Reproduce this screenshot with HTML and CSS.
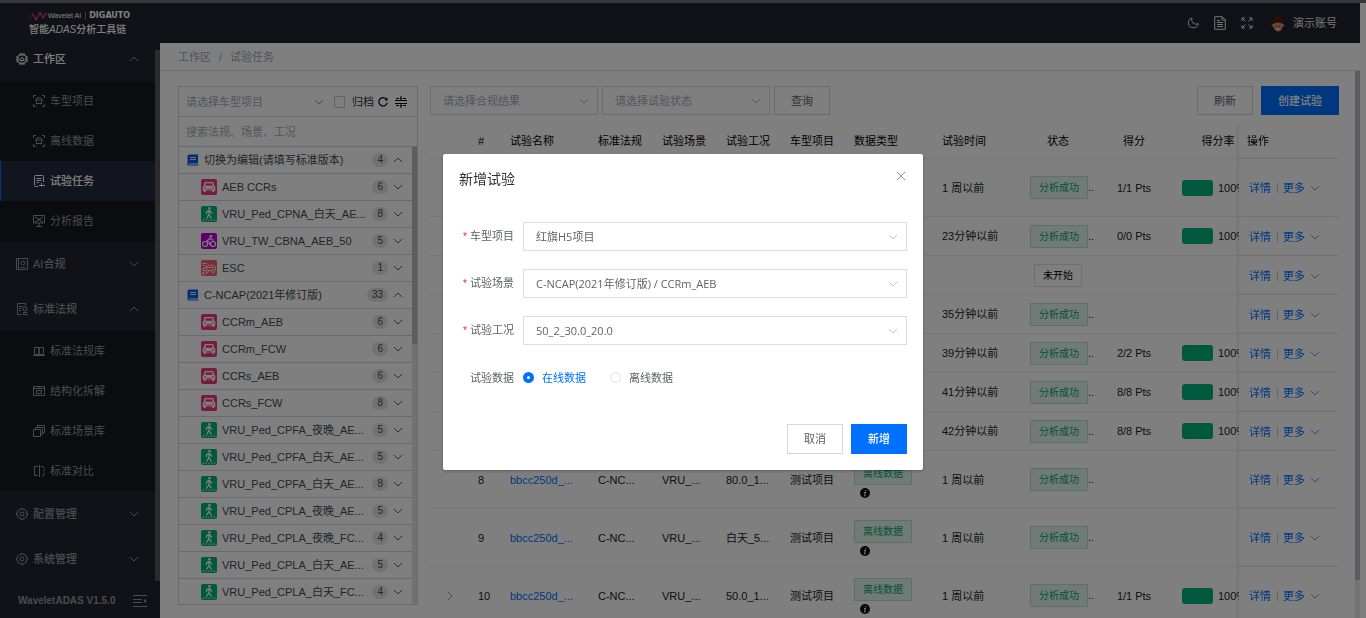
FILE: index.html
```
<!DOCTYPE html>
<html lang="zh-CN">
<head>
    <meta charset="UTF-8">
    <meta name="viewport" content="width=device-width, initial-scale=1.0">
    <title>试验任务</title>
    <link rel="stylesheet" href="styles.css">
</head>
<body>
    <!-- Icon set -->
    <svg class="icon-set" aria-hidden="true">
        <symbol id="i-down" viewBox="0 0 12 12"><path d="M2 4l4 4 4-4" fill="none" stroke="currentColor"/></symbol>
        <symbol id="i-up" viewBox="0 0 12 12"><path d="M2 8l4-4 4 4" fill="none" stroke="currentColor"/></symbol>
        <symbol id="i-right" viewBox="0 0 12 12"><path d="M4 2l4 4-4 4" fill="none" stroke="currentColor"/></symbol>
        <symbol id="i-close" viewBox="0 0 12 12"><path d="M2 2l8 8M10 2l-8 8" fill="none" stroke="currentColor"/></symbol>
        <symbol id="i-chip" viewBox="0 0 12 12"><g fill="none" stroke="currentColor"><rect x="2" y="2" width="8" height="8" rx="2"/><path d="M4 7.500h4V6L6 4.500 4 6zM4 0v2M6 0v2M8 0v2M4 10v2M6 10v2M8 10v2M0 4h2M0 6h2M0 8h2M10 4h2M10 6h2M10 8h2"/></g></symbol>
        <symbol id="i-scan" viewBox="0 0 12 12"><g fill="none" stroke="currentColor"><path d="M.5 3V.5H3M9 .5h2.500V3M11.500 9v2.500H9M3 11.500H.5V9"/><path d="M3.500 9.500v-3L2.500 5.500 4 3h4l1.500 2.500-1 1v3M2 5.500l2-.5h4l2 .5M4 8.500h4"/></g></symbol>
        <symbol id="i-task" viewBox="0 0 12 12"><path d="M5 11.500H2.500a1 1 0 0 1-1-1v-9a1 1 0 0 1 1-1h7a1 1 0 0 1 1 1V7M3.500 3.500h5M3.500 5.500h5M3.500 7.500H6M6 10.500h6M8.500 8v3.500" fill="none" stroke="currentColor"/></symbol>
        <symbol id="i-report" viewBox="0 0 12 12"><path d="M.5.5h11v7.500H.5zM6 8v3M3 11.500h6M2 2.500h2l4 4h2M2 6.500h2l4-4h2M4 4.500h4" fill="none" stroke="currentColor"/></symbol>
        <symbol id="i-book-user" viewBox="0 0 12 12"><g fill="none" stroke="currentColor"><path d="M.5.5h11v11H.5zM2.500.5v11M4.500 9.500h5"/><circle cx="7" cy="5" r="2"/></g></symbol>
        <symbol id="i-law" viewBox="0 0 12 12"><g fill="none" stroke="currentColor"><path d="M5 11.500H1.500V.5h8V3M3 3.500h4M3 5.500h2M3 7.500h2M6 11.500h6M7 9.500h4"/><circle cx="9" cy="6" r="2"/></g></symbol>
        <symbol id="i-lib" viewBox="0 0 12 12"><path d="M1.500 2.500h4.500v7H1.500zM6 2.500h4.500v7H6zM0 10.500h12" fill="none" stroke="currentColor"/></symbol>
        <symbol id="i-struct" viewBox="0 0 12 12"><path d="M.5 1.500h11v9H.5zM.5 3.500h11M3.500 5.500h5v3h-5zM6 1.500v2" fill="none" stroke="currentColor"/></symbol>
        <symbol id="i-cube" viewBox="0 0 12 12"><path d="M.5 4.500h7v7h-7zM2.500 4V2.500h7v7H8M4.500 2V.5h7v7H10" fill="none" stroke="currentColor"/></symbol>
        <symbol id="i-compare" viewBox="0 0 12 12"><g fill="none" stroke="currentColor"><path d="M5 1.500H1.500v9H5M6.500 0v12"/><path d="M8 1.500h3v9H8" stroke-dasharray="2 1"/></g></symbol>
        <symbol id="i-gear" viewBox="0 0 12 12"><g fill="none" stroke="currentColor"><circle cx="6" cy="6" r="2"/><path d="M5 .5h2l.5 1.500 1.500-.5 1.500 1.500-.5 1.500 1.500.5v2l-1.500.5.5 1.500L9 10.500 7.500 10 7 11.500H5L4.500 10l-1.500.5L1.500 9 2 7.500.5 7V5L2 4.500 1.500 3 3 1.500l1.500.5z"/></g></symbol>
        <symbol id="i-fold" viewBox="0 0 14 12"><path d="M0 .5h14M0 4.500h9M0 7.500h9M0 11.500h14" fill="none" stroke="currentColor"/><path d="M13 3.500v5L10.500 6z" fill="currentColor"/></symbol>
        <symbol id="i-moon" viewBox="0 0 12 12"><path d="M5 1a4.500 4.500 0 0 0 6.300 5.700A5 5 0 1 1 5 1z" fill="none" stroke="currentColor"/></symbol>
        <symbol id="i-doc" viewBox="0 0 12 14"><path d="M.7.7h7.600l3 3v9.600H.7zM8 1v3h3" fill="none" stroke="currentColor"/><path d="M3 4.500h3M3 6.500h6M3 8.500h6M3 10.500h6" stroke="currentColor"/></symbol>
        <symbol id="i-full" viewBox="0 0 12 12"><path d="M1 4V1h3M8 1h3v3M11 8v3H8M4 11H1V8M1 1l3.500 3.500M11 1L7.500 4.500M11 11L7.500 7.500M1 11l3.500-3.500" fill="none" stroke="currentColor"/></symbol>
        <symbol id="i-refresh" viewBox="0 0 12 12"><path d="M9.200 3A4.200 4.200 0 1 0 10.200 6.500" fill="none" stroke="currentColor" stroke-width="1.200"/><path d="M10.500 1.500v3h-3z" fill="currentColor"/></symbol>
        <symbol id="i-collapse" viewBox="0 0 12 12"><path d="M0 4.500h12M0 7.500h12M1 2.500h3M8 2.500h3M1 9.500h3M8 9.500h3M6 0v3M6 9v3" stroke="currentColor"/><path d="M4.500 2h3L6 4zM4.500 10h3L6 8z" fill="currentColor"/></symbol>
        <symbol id="i-book" viewBox="0 0 12 12"><path d="M2 .5h9v9H2a1 1 0 0 0 0 1h9.500v1H2a1.500 1.500 0 0 1-1.500-1.500V2A1.500 1.500 0 0 1 2 .5z" fill="#0a5ce0"/><path d="M3 3.500h6M3 5.500h6" stroke="#dbe8ff"/></symbol>
        <symbol id="i-car" viewBox="0 0 16 16"><rect width="16" height="16" rx="2" fill="#f0387f"/><path d="M4.500 3h7a1 1 0 0 1 1 .7L13.300 7l1 .8v3.700h-1V13h-2v-1.500H4.700V13h-2v-1.500h-1V7.800l1-.8.8-3.300a1 1 0 0 1 1-.7z" fill="#fff"/><path d="M4.800 4.300h6.400l.6 2.400H4.200zM3 8.500h2v1H3zM11 8.500h2v1h-2zM5.500 10h5v.8h-5z" fill="#f0387f"/></symbol>
        <symbol id="i-walk" viewBox="0 0 16 16"><rect width="16" height="16" rx="2" fill="#00b07a"/><circle cx="8.500" cy="2.300" r="1.300" fill="#fff"/><path d="M8 4v4.500l2.500 4M8 8.500L5.500 12.500M7.500 4.500L5.500 6v2M8.500 4.500L11 7.500" fill="none" stroke="#fff" stroke-width="1.300"/><path d="M2 15l1-2M5 15l.5-1.500M8 15v-1.500M11 15l-.5-1.500M14 15l-1-2" stroke="#fff" stroke-width=".8"/></symbol>
        <symbol id="i-bike" viewBox="0 0 16 16"><rect width="16" height="16" rx="2" fill="#b800d8"/><g fill="none" stroke="#fff" stroke-width="1.200"><circle cx="4" cy="11" r="2.500"/><circle cx="12" cy="11" r="2.500"/><path d="M8.500 12V9.500L6 8l3-3 2 2h2"/></g><circle cx="10" cy="3.200" r="1.300" fill="#fff"/></symbol>
        <symbol id="i-esc" viewBox="0 0 16 16"><rect width="16" height="16" rx="2" fill="#f4606c"/><g fill="none" stroke="#fff" stroke-width=".8"><path d="M1 3.500h5M2 5.500h2M1 12.500h2M1 14h5M4 8l3-2.500 4-.5 3.500 1.500V10H14M10 10.500H8M4 10.500H2V8.500L5 7.500h8"/><circle cx="6" cy="11" r="1.500"/><circle cx="12" cy="11" r="1.500"/></g></symbol>
        <symbol id="i-info" viewBox="0 0 10 10"><circle cx="5" cy="5" r="5" fill="#111"/><path d="M5.700 2v1.200M5.400 4.200L4.700 7.500M4 4.500h1.500M4 7.800h1.500" stroke="#fff"/></symbol>
        <symbol id="i-wave" viewBox="0 0 18 10"><path d="M4 4l3 4 4-5.500L14 6l2.500-3" fill="none" stroke="#e0307c" stroke-width="1.200"/><g fill="#e0307c"><circle cx="1" cy="6" r=".8"/><circle cx="3.500" cy="3.500" r="1"/><circle cx="7" cy="8" r="1.600"/><circle cx="11" cy="2.500" r="1.600"/><circle cx="14" cy="6" r="1.300"/><circle cx="17" cy="3" r="1"/></g></symbol>
        <symbol id="i-avatar" viewBox="0 0 14 20"><path d="M6 1q2-1 2 2 3 1 4 6l-1 3H3L2 9q1-5 4-6z" fill="#42211b"/><path d="M2 11q5-3 10 0l1.500 1.500-2 1.500q-1 4.500-4.500 4.500T2.500 14L.5 12.500z" fill="#d98a63"/><path d="M5 13.500h1M8 13.500h1" stroke="#42211b"/><path d="M5.500 16h3" stroke="#fff"/></symbol>
    </svg>

    <div class="app">
        <!-- Sidebar -->
        <aside class="sidebar">
            <div class="sidebar-body">
                <div class="logo">
                    <div class="logo-brand">
                        <svg class="logo-mark"><use href="#i-wave"/></svg>
                        <span>Wavelet AI</span>
                        <b>DIGAUTO</b>
                    </div>
                    <div class="logo-title">智能<i>ADAS</i>分析工具链</div>
                </div>
                <nav class="menu">
                    <a class="menu-item open" href="#"><svg class="icon"><use href="#i-chip"/></svg><span>工作区</span><svg class="arrow"><use href="#i-up"/></svg></a>
                    <div class="submenu">
                        <a class="submenu-item" href="#"><svg class="icon"><use href="#i-scan"/></svg>车型项目</a>
                        <a class="submenu-item" href="#"><svg class="icon"><use href="#i-scan"/></svg>离线数据</a>
                        <a class="submenu-item active" href="#"><svg class="icon"><use href="#i-task"/></svg>试验任务</a>
                        <a class="submenu-item" href="#"><svg class="icon"><use href="#i-report"/></svg>分析报告</a>
                    </div>
                    <a class="menu-item" href="#"><svg class="icon"><use href="#i-book-user"/></svg><span>AI合规</span><svg class="arrow"><use href="#i-down"/></svg></a>
                    <a class="menu-item" href="#"><svg class="icon"><use href="#i-law"/></svg><span>标准法规</span><svg class="arrow"><use href="#i-up"/></svg></a>
                    <div class="submenu">
                        <a class="submenu-item" href="#"><svg class="icon"><use href="#i-lib"/></svg>标准法规库</a>
                        <a class="submenu-item" href="#"><svg class="icon"><use href="#i-struct"/></svg>结构化拆解</a>
                        <a class="submenu-item" href="#"><svg class="icon"><use href="#i-cube"/></svg>标准场景库</a>
                        <a class="submenu-item" href="#"><svg class="icon"><use href="#i-compare"/></svg>标准对比</a>
                    </div>
                    <a class="menu-item" href="#"><svg class="icon"><use href="#i-gear"/></svg><span>配置管理</span><svg class="arrow"><use href="#i-down"/></svg></a>
                    <a class="menu-item" href="#"><svg class="icon"><use href="#i-gear"/></svg><span>系统管理</span><svg class="arrow"><use href="#i-down"/></svg></a>
                </nav>
                <div class="sidebar-footer">
                    <b>WaveletADAS V1.5.0</b>
                    <svg class="fold"><use href="#i-fold"/></svg>
                </div>
            </div>
            <div class="sidebar-bar"></div>
        </aside>

        <div class="page">
            <header class="topbar">
                <svg class="icon"><use href="#i-moon"/></svg>
                <svg class="icon-tall"><use href="#i-doc"/></svg>
                <svg class="icon"><use href="#i-full"/></svg>
                <div class="account"><svg class="avatar"><use href="#i-avatar"/></svg>演示账号</div>
            </header>
            <div class="breadcrumb"><a href="#">工作区</a><span>/</span><a href="#">试验任务</a></div>

            <div class="scroll-area">
                <main class="content">
                    <!-- Scene tree -->
                    <section class="tree">
                        <div class="tree-filter">
                            <select class="tree-select" aria-label="车型项目"><option>请选择车型项目</option></select>
                            <svg class="arrow"><use href="#i-down"/></svg>
                            <label class="archive"><input type="checkbox">归档</label>
                            <svg class="tool"><use href="#i-refresh"/></svg>
                            <svg class="tool last"><use href="#i-collapse"/></svg>
                        </div>
                        <input class="tree-search" type="text" placeholder="搜索法规、场景、工况" aria-label="搜索">
                        <div class="tree-body">
                            <div class="tree-list">
                                <div class="node parent"><svg class="icon"><use href="#i-book"/></svg><span>切换为编辑(请填写标准版本)</span><em>4</em><svg class="arrow"><use href="#i-up"/></svg></div>
                                <div class="node"><svg class="scene"><use href="#i-car"/></svg><span>AEB CCRs</span><em>6</em><svg class="arrow"><use href="#i-down"/></svg></div>
                                <div class="node"><svg class="scene"><use href="#i-walk"/></svg><span>VRU_Ped_CPNA_白天_AE...</span><em>8</em><svg class="arrow"><use href="#i-down"/></svg></div>
                                <div class="node"><svg class="scene"><use href="#i-bike"/></svg><span>VRU_TW_CBNA_AEB_50</span><em>5</em><svg class="arrow"><use href="#i-down"/></svg></div>
                                <div class="node"><svg class="scene"><use href="#i-esc"/></svg><span>ESC</span><em>1</em><svg class="arrow"><use href="#i-down"/></svg></div>
                                <div class="node parent"><svg class="icon"><use href="#i-book"/></svg><span>C-NCAP(2021年修订版)</span><em>33</em><svg class="arrow"><use href="#i-up"/></svg></div>
                                <div class="node"><svg class="scene"><use href="#i-car"/></svg><span>CCRm_AEB</span><em>6</em><svg class="arrow"><use href="#i-down"/></svg></div>
                                <div class="node"><svg class="scene"><use href="#i-car"/></svg><span>CCRm_FCW</span><em>6</em><svg class="arrow"><use href="#i-down"/></svg></div>
                                <div class="node"><svg class="scene"><use href="#i-car"/></svg><span>CCRs_AEB</span><em>6</em><svg class="arrow"><use href="#i-down"/></svg></div>
                                <div class="node"><svg class="scene"><use href="#i-car"/></svg><span>CCRs_FCW</span><em>8</em><svg class="arrow"><use href="#i-down"/></svg></div>
                                <div class="node"><svg class="scene"><use href="#i-walk"/></svg><span>VRU_Ped_CPFA_夜晚_AE...</span><em>5</em><svg class="arrow"><use href="#i-down"/></svg></div>
                                <div class="node"><svg class="scene"><use href="#i-walk"/></svg><span>VRU_Ped_CPFA_白天_AE...</span><em>5</em><svg class="arrow"><use href="#i-down"/></svg></div>
                                <div class="node"><svg class="scene"><use href="#i-walk"/></svg><span>VRU_Ped_CPFA_白天_AE...</span><em>8</em><svg class="arrow"><use href="#i-down"/></svg></div>
                                <div class="node"><svg class="scene"><use href="#i-walk"/></svg><span>VRU_Ped_CPLA_夜晚_AE...</span><em>5</em><svg class="arrow"><use href="#i-down"/></svg></div>
                                <div class="node"><svg class="scene"><use href="#i-walk"/></svg><span>VRU_Ped_CPLA_夜晚_FC...</span><em>4</em><svg class="arrow"><use href="#i-down"/></svg></div>
                                <div class="node"><svg class="scene"><use href="#i-walk"/></svg><span>VRU_Ped_CPLA_白天_AE...</span><em>5</em><svg class="arrow"><use href="#i-down"/></svg></div>
                                <div class="node"><svg class="scene"><use href="#i-walk"/></svg><span>VRU_Ped_CPLA_白天_FC...</span><em>4</em><svg class="arrow"><use href="#i-down"/></svg></div>
                            </div>
                            <div class="tree-bar"><div class="tree-thumb"></div></div>
                        </div>
                    </section>

                    <!-- Task list -->
                    <section class="tasks">
                        <div class="filters">
                            <div class="select-box filter"><select aria-label="合规结果"><option>请选择合规结果</option></select><svg class="arrow"><use href="#i-down"/></svg></div>
                            <div class="select-box filter"><select aria-label="试验状态"><option>请选择试验状态</option></select><svg class="arrow"><use href="#i-down"/></svg></div>
                            <button class="btn">查询</button>
                            <div class="filters-right">
                                <button class="btn">刷新</button>
                                <button class="btn primary">创建试验</button>
                            </div>
                        </div>
                        <div class="table-container">
                            <table>
                                <colgroup>
                                    <col class="c-expand"><col class="c-index"><col class="c-wide"><col class="c-short"><col class="c-short"><col class="c-short"><col class="c-short"><col class="c-wide"><col class="c-wide"><col class="c-status"><col class="c-score"><col class="c-wide"><col class="c-ops">
                                </colgroup>
                                <thead>
                                    <tr>
                                        <th></th><th>#</th><th>试验名称</th><th>标准法规</th><th>试验场景</th><th>试验工况</th><th>车型项目</th><th>数据类型</th><th>试验时间</th><th class="center">状态</th><th class="center">得分</th><th class="center">得分率</th><th class="ops">操作</th>
                                    </tr>
                                </thead>
                                <tbody>
                                    <tr class="tall">
                                        <td colspan="8"></td><td>1 周以前</td>
                                        <td><span class="tag">分析成功</span>..</td><td class="center">1/1 Pts</td><td><div class="rate"><i></i>100%</div></td>
                                        <td class="ops"><a href="#">详情</a><s></s><a href="#">更多<svg class="arrow"><use href="#i-down"/></svg></a></td>
                                    </tr>
                                    <tr>
                                        <td colspan="8"></td><td>23分钟以前</td>
                                        <td><span class="tag">分析成功</span>..</td><td class="center">0/0 Pts</td><td><div class="rate"><i></i>100%</div></td>
                                        <td class="ops"><a href="#">详情</a><s></s><a href="#">更多<svg class="arrow"><use href="#i-down"/></svg></a></td>
                                    </tr>
                                    <tr>
                                        <td colspan="8"></td><td></td>
                                        <td class="center"><span class="tag plain">未开始</span></td><td></td><td></td>
                                        <td class="ops"><a href="#">详情</a><s></s><a href="#">更多<svg class="arrow"><use href="#i-down"/></svg></a></td>
                                    </tr>
                                    <tr>
                                        <td colspan="8"></td><td>35分钟以前</td>
                                        <td><span class="tag">分析成功</span>..</td><td></td><td></td>
                                        <td class="ops"><a href="#">详情</a><s></s><a href="#">更多<svg class="arrow"><use href="#i-down"/></svg></a></td>
                                    </tr>
                                    <tr>
                                        <td colspan="8"></td><td>39分钟以前</td>
                                        <td><span class="tag">分析成功</span>..</td><td class="center">2/2 Pts</td><td><div class="rate"><i></i>100%</div></td>
                                        <td class="ops"><a href="#">详情</a><s></s><a href="#">更多<svg class="arrow"><use href="#i-down"/></svg></a></td>
                                    </tr>
                                    <tr>
                                        <td colspan="8"></td><td>41分钟以前</td>
                                        <td><span class="tag">分析成功</span>..</td><td class="center">8/8 Pts</td><td><div class="rate"><i></i>100%</div></td>
                                        <td class="ops"><a href="#">详情</a><s></s><a href="#">更多<svg class="arrow"><use href="#i-down"/></svg></a></td>
                                    </tr>
                                    <tr>
                                        <td colspan="8"></td><td>42分钟以前</td>
                                        <td><span class="tag">分析成功</span>..</td><td class="center">8/8 Pts</td><td><div class="rate"><i></i>100%</div></td>
                                        <td class="ops"><a href="#">详情</a><s></s><a href="#">更多<svg class="arrow"><use href="#i-down"/></svg></a></td>
                                    </tr>
                                    <tr class="tall">
                                        <td></td><td>8</td><td><a href="#">bbcc250d_...</a></td><td>C-NC...</td><td>VRU_...</td><td>80.0_1...</td><td>测试项目</td>
                                        <td><span class="tag">离线数据</span><svg class="info"><use href="#i-info"/></svg></td><td>1 周以前</td>
                                        <td><span class="tag">分析成功</span>..</td><td></td><td></td>
                                        <td class="ops"><a href="#">详情</a><s></s><a href="#">更多<svg class="arrow"><use href="#i-down"/></svg></a></td>
                                    </tr>
                                    <tr class="tall">
                                        <td></td><td>9</td><td><a href="#">bbcc250d_...</a></td><td>C-NC...</td><td>VRU_...</td><td>白天_5...</td><td>测试项目</td>
                                        <td><span class="tag">离线数据</span><svg class="info"><use href="#i-info"/></svg></td><td>1 周以前</td>
                                        <td><span class="tag">分析成功</span>..</td><td></td><td></td>
                                        <td class="ops"><a href="#">详情</a><s></s><a href="#">更多<svg class="arrow"><use href="#i-down"/></svg></a></td>
                                    </tr>
                                    <tr class="tall">
                                        <td class="center"><svg class="arrow"><use href="#i-right"/></svg></td><td>10</td><td><a href="#">bbcc250d_...</a></td><td>C-NC...</td><td>VRU_...</td><td>50.0_1...</td><td>测试项目</td>
                                        <td><span class="tag">离线数据</span><svg class="info"><use href="#i-info"/></svg></td><td>1 周以前</td>
                                        <td><span class="tag">分析成功</span>..</td><td class="center">1/1 Pts</td><td><div class="rate"><i></i>100%</div></td>
                                        <td class="ops"><a href="#">详情</a><s></s><a href="#">更多<svg class="arrow"><use href="#i-down"/></svg></a></td>
                                    </tr>
                                </tbody>
                            </table>
                        </div>
                    </section>
                </main>
                <div class="content-bar"><div class="content-thumb"></div></div>
            </div>
        </div>
    </div>

    <!-- Create task modal -->
    <div class="modal-overlay">
        <form class="modal" role="dialog" aria-labelledby="modalTitle">
            <div class="modal-header">
                <h3 class="modal-title" id="modalTitle">新增试验</h3>
                <button class="close-button" type="button" aria-label="关闭"><svg class="icon"><use href="#i-close"/></svg></button>
            </div>
            <div class="modal-body">
                <div class="form-row">
                    <label class="required" for="project">车型项目</label>
                    <div class="select-box"><select id="project"><option>红旗H5项目</option></select><svg class="arrow"><use href="#i-down"/></svg></div>
                </div>
                <div class="form-row">
                    <label class="required" for="scene">试验场景</label>
                    <div class="select-box"><select id="scene"><option>C-NCAP(2021年修订版) / CCRm_AEB</option></select><svg class="arrow"><use href="#i-down"/></svg></div>
                </div>
                <div class="form-row">
                    <label class="required" for="condition">试验工况</label>
                    <div class="select-box"><select id="condition"><option>50_2_30.0_20.0</option></select><svg class="arrow"><use href="#i-down"/></svg></div>
                </div>
                <div class="form-row" role="radiogroup" aria-labelledby="dataLabel">
                    <span class="form-label" id="dataLabel">试验数据</span>
                    <div class="radios">
                        <label class="radio"><input type="radio" name="data" checked><span>在线数据</span></label>
                        <label class="radio"><input type="radio" name="data"><span>离线数据</span></label>
                    </div>
                </div>
            </div>
            <div class="modal-footer">
                <button class="btn" type="button">取消</button>
                <button class="btn primary" type="button">新增</button>
            </div>
        </form>
    </div>
</body>
</html>
```
FILE: styles.css
```
/* Global Styles */
* {
    box-sizing: border-box;
}

body {
    margin: 0;
    height: 100vh;
    overflow: hidden;
    padding-right: 6px;
    border-top: 3px solid #6c6e72;
    background-color: #fff;
    color: #303133;
    font-family: "Liberation Sans", "Noto Sans CJK SC", sans-serif;
    font-size: 11px;
    line-height: 16px;
}

a {
    color: inherit;
    text-decoration: none;
}

svg {
    display: block;
    flex: none;
}

input, select, button {
    margin: 0;
    font: inherit;
    color: inherit;
}

select {
    appearance: none;
    border: none;
    outline: none;
    background: none;
}

.icon-set {
    display: none;
}

.icon, .arrow {
    width: 12px;
    height: 12px;
}

.arrow {
    color: #909399;
}

.app {
    display: flex;
    height: 100%;
}

/* Sidebar */
.sidebar {
    display: flex;
    width: 160px;
    flex: none;
    background-color: #22242e;
    color: #94969c;
}

.sidebar-body {
    flex: 1;
    display: flex;
    flex-direction: column;
}

.sidebar-bar {
    width: 5px;
    margin: 47px 0 37px;
    background-color: #56575d;
}

.logo {
    height: 33px;
    padding: 7px 0 0 29px;
    color: #fff;
    white-space: nowrap;
}

.logo-brand {
    display: flex;
    align-items: center;
    height: 12px;
    font-size: 7px;
}

.logo-brand b {
    margin-left: 4px;
    padding-left: 3px;
    border-left: 1px solid #777;
    font-family: "DejaVu Sans", sans-serif;
    font-size: 8px;
    line-height: 8px;
}

.logo-mark {
    width: 18px;
    height: 10px;
    margin-right: 1px;
}

.logo-title {
    font-size: 10px;
    font-weight: 500;
    line-height: 16px;
}

.menu {
    flex: 1;
}

.menu-item {
    display: flex;
    align-items: center;
    height: 45px;
    padding: 0 15px 0 16px;
}

.menu-item span {
    flex: 1;
    margin-left: 5px;
    font-weight: 500;
}

.menu-item.open {
    color: #fff;
}

.submenu {
    background-color: #16181f;
}

.submenu-item {
    display: flex;
    align-items: center;
    gap: 5px;
    height: 40px;
    padding-left: 33px;
}

.submenu-item.active {
    padding-left: 32px;
    border-left: 1px solid #0070ff;
    background-color: #242b3d;
    color: #fff;
    font-weight: 500;
}

.sidebar-footer {
    display: flex;
    align-items: center;
    justify-content: space-between;
    height: 34px;
    padding: 0 8px 0 18px;
    font-size: 10px;
}

.fold {
    width: 14px;
    height: 12px;
}

/* Header */
.page {
    flex: 1;
    min-width: 0;
    display: flex;
    flex-direction: column;
}

.topbar {
    display: flex;
    align-items: center;
    justify-content: flex-end;
    gap: 15px;
    height: 40px;
    padding-right: 23px;
    flex: none;
    background-color: #22242e;
    color: #e8e8ea;
}

.icon-tall {
    width: 12px;
    height: 14px;
}

.account {
    display: flex;
    align-items: center;
    gap: 8px;
    margin-left: 3px;
}

.avatar {
    width: 14px;
    height: 20px;
}

.breadcrumb {
    display: flex;
    align-items: center;
    gap: 8px;
    height: 28px;
    flex: none;
    padding-left: 18px;
    border-bottom: 1px solid #dcdee2;
    color: #97a8be;
}

.scroll-area {
    display: flex;
    flex: 1;
    min-height: 0;
}

.content {
    flex: 1;
    min-width: 0;
    display: flex;
    gap: 12px;
    padding: 15px 16px 0 18px;
}

.content-bar {
    width: 5px;
    background-color: #e6e6e6;
}

.content-thumb {
    height: 93%;
    background-color: #b8babd;
}

/* Scene tree */
.tree {
    display: flex;
    flex-direction: column;
    width: 240px;
    flex: none;
    margin-bottom: 13px;
    border: 1px solid #d2d5da;
}

.tree-filter {
    display: flex;
    align-items: center;
    height: 30px;
    padding: 0 10px 0 7px;
    border-bottom: 1px solid #d2d5da;
}

.tree-select {
    flex: 1;
    min-width: 0;
    padding: 0;
    color: #a8abb2;
}

.archive {
    display: flex;
    align-items: center;
    gap: 7px;
    margin: 0 3px 0 9px;
}

.archive input {
    appearance: none;
    width: 11px;
    height: 12px;
    border: 1px solid #c4c8ce;
}

.tool {
    width: 12px;
    height: 12px;
    color: #000;
}

.tool.last {
    margin-left: 6px;
}

.tree-search {
    height: 30px;
    padding: 0 7px;
    border: none;
    border-bottom: 1px solid #d2d5da;
    background: none;
}

.tree-search::placeholder {
    color: #a8abb2;
}

.tree-body {
    flex: 1;
    min-height: 0;
    display: flex;
}

.tree-list {
    flex: 1;
    min-width: 0;
    overflow: hidden;
}

.node {
    display: flex;
    align-items: center;
    height: 27px;
    padding: 0 8px 0 22px;
    border-bottom: 1px solid #d2d5da;
    color: #484a4e;
}

.node.parent {
    padding-left: 8px;
}

.node span {
    flex: 1;
    margin-left: 5px;
    overflow: hidden;
    white-space: nowrap;
}

.node em {
    min-width: 15px;
    padding: 0 5px;
    border-radius: 8px;
    background-color: #e4e5e7;
    font-style: normal;
    font-size: 10px;
    line-height: 14px;
    text-align: center;
}

.node .arrow {
    margin-left: 4px;
    color: #606266;
}

.scene {
    width: 16px;
    height: 16px;
}

.tree-bar {
    width: 5px;
    background-color: #e2e2e2;
}

.tree-thumb {
    height: 43%;
    background-color: #b8babd;
}

/* Filters and buttons */
.tasks {
    flex: 1;
    min-width: 0;
}

.filters {
    display: flex;
    gap: 4px;
    margin-bottom: 9px;
}

.filters-right {
    display: flex;
    gap: 8px;
    margin-left: auto;
}

.select-box {
    display: flex;
    align-items: center;
    flex: 1;
    height: 29px;
    padding-right: 7px;
    border: 1px solid #d9dde4;
}

.select-box select {
    flex: 1;
    min-width: 0;
    height: 100%;
    padding: 0 0 0 12px;
}

.select-box .arrow {
    color: #c0c4cc;
}

.select-box.filter {
    flex: none;
    width: 168px;
    color: #a8abb2;
}

.select-box.filter .arrow {
    color: #a8abb2;
}

.btn {
    height: 29px;
    padding: 0 16px;
    border: 1px solid #d3d7de;
    background-color: #fff;
    color: #606266;
    cursor: pointer;
}

.btn.primary {
    border-color: #0070ff;
    background-color: #0070ff;
    color: #fff;
    font-weight: 500;
}

/* Task table */
.table-container {
    overflow: hidden;
}

table {
    width: 100%;
    min-width: 932px;
    table-layout: fixed;
    border-collapse: separate;
    border-spacing: 0;
}

.c-expand { width: 40px; }
.c-index { width: 32px; }
.c-wide { width: 88px; }
.c-short { width: 64px; }
.c-status { width: 72px; }
.c-score { width: 80px; }
.c-ops { width: 100px; }

th, td {
    height: 39px;
    padding: 0 0 0 8px;
    border-bottom: 1px solid #eff1f5;
    text-align: left;
    white-space: nowrap;
    color: #222;
}

th {
    height: 35px;
    color: #000;
    font-weight: normal;
}

.tall td {
    height: 58px;
}

.center {
    padding: 0;
    text-align: center;
}

.center .arrow {
    margin: 0 auto;
}

td a {
    color: #0070ff;
}

.ops {
    position: sticky;
    right: 0;
    background-color: #fff;
    box-shadow: -1px 0 4px rgba(0, 0, 0, 0.12);
}

td.ops {
    padding-left: 10px;
}

.ops a {
    display: inline-flex;
    align-items: center;
    gap: 4px;
    vertical-align: middle;
}

.ops .arrow {
    color: #5a9cf8;
}

.ops s {
    display: inline-block;
    width: 1px;
    height: 10px;
    margin: 0 5px 0 6px;
    background-color: #c8cbd0;
    vertical-align: middle;
}

.tag {
    display: inline-block;
    padding: 0 8px;
    border: 1px solid #b0e3d2;
    background-color: #e2f5ef;
    color: #00a870;
    font-size: 10px;
    line-height: 21px;
}

.tag.plain {
    border-color: #dcdfe6;
    background-color: #fff;
    color: #000;
}

.info {
    width: 10px;
    height: 10px;
    margin: 3px 0 0 6px;
}

.rate {
    display: flex;
    align-items: center;
    gap: 5px;
}

.rate i {
    width: 31px;
    height: 16px;
    border-radius: 3px;
    background-color: #00b07a;
}

/* Modal */
.modal-overlay {
    position: fixed;
    inset: 0;
    display: flex;
    align-items: center;
    justify-content: center;
    padding-top: 6px;
    background-color: rgba(0, 0, 0, 0.5);
    z-index: 1000;
}

.modal {
    width: 90%;
    max-width: 480px;
    padding: 16px;
    border-radius: 2px;
    background-color: #fff;
    box-shadow: 0 1px 3px rgba(0, 0, 0, 0.3);
    color: #606266;
    font-family: "Open Sans", "Noto Sans CJK SC", sans-serif;
}

.modal-header {
    display: flex;
    align-items: center;
    justify-content: space-between;
    height: 18px;
    margin-bottom: 34px;
}

.modal-title {
    margin: 0;
    color: #303133;
    font-size: 14px;
    font-weight: normal;
}

.close-button {
    align-self: flex-start;
    padding: 0;
    border: none;
    background: none;
    color: #909399;
    cursor: pointer;
}

.modal-body {
    display: grid;
    gap: 18px;
}

.form-row {
    display: flex;
    align-items: center;
    gap: 9px;
    height: 29px;
}

.form-row > label, .form-label {
    width: 55px;
    text-align: right;
}

.required::before {
    content: "*";
    margin-right: 3px;
    color: #f5222d;
    font-family: "Liberation Sans", sans-serif;
    font-size: 10px;
}

.radios {
    display: flex;
    gap: 24px;
}

.radio {
    display: flex;
    align-items: center;
    gap: 8px;
}

.radio input {
    appearance: none;
    width: 11px;
    height: 11px;
    border: 1px solid #dcdfe6;
    border-radius: 50%;
}

.radio input:checked {
    border: 4px solid #0070ff;
}

.radio input:checked + span {
    color: #0070ff;
}

.modal-footer {
    display: flex;
    justify-content: flex-end;
    gap: 8px;
    margin-top: 32px;
}

.modal-footer .btn {
    height: 30px;
}
```
